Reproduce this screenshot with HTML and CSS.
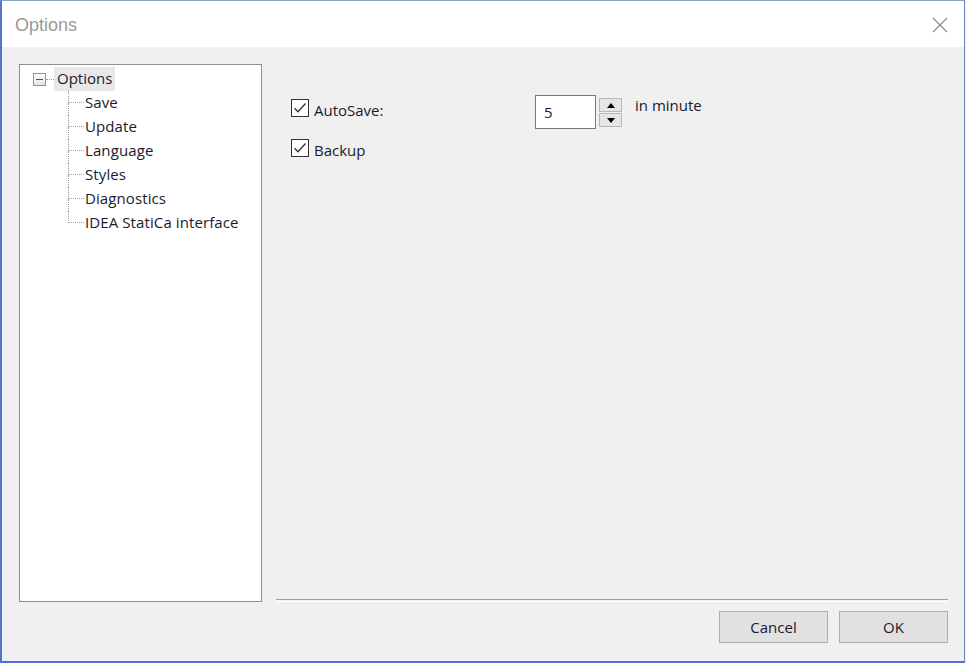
FILE: index.html
```html
<!DOCTYPE html>
<html>
<head>
<meta charset="utf-8">
<link rel="stylesheet" href="styles.css">
</head>
<body>
<div class="window">
  <div class="titlebar">
    <span class="title">Options</span>
    <svg class="close" width="16" height="16" viewBox="0 0 16 16"><path d="M1 1L15 15M15 1L1 15" stroke="#8a8a8a" stroke-width="1.1" fill="none"/></svg>
  </div>
  <div class="content">
    <div class="main">
      <div class="tree">
        <div class="root-row">
          <span class="expander"><span class="minus"></span></span>
          <span class="root-link"></span>
          <span class="label selected">Options</span>
        </div>
        <div class="child"><span class="conn"><span class="top"></span><span class="bot"></span></span><span class="label">Save</span></div>
        <div class="child"><span class="conn"><span class="top"></span><span class="bot"></span></span><span class="label">Update</span></div>
        <div class="child"><span class="conn"><span class="top"></span><span class="bot"></span></span><span class="label">Language</span></div>
        <div class="child"><span class="conn"><span class="top"></span><span class="bot"></span></span><span class="label">Styles</span></div>
        <div class="child"><span class="conn"><span class="top"></span><span class="bot"></span></span><span class="label">Diagnostics</span></div>
        <div class="child last"><span class="conn"><span class="top"></span><span class="bot"></span></span><span class="label">IDEA StatiCa interface</span></div>
      </div>
      <div class="panel">
        <div class="options">
          <div class="row row-autosave">
            <label class="check">
              <span class="box"><svg width="14" height="14" viewBox="0 0 14 14"><path d="M1.5 7.2L5 10.8L12.5 2.5" stroke="#333" stroke-width="1.3" fill="none"/></svg></span>
              <span class="ctext">AutoSave:</span>
            </label>
            <div class="numbox">5</div>
            <div class="spin">
              <div class="spin-btn"><svg width="8" height="5" viewBox="0 0 8 5"><path d="M0 5L4 0L8 5Z" fill="#000"/></svg></div>
              <div class="spin-btn"><svg width="8" height="5" viewBox="0 0 8 5"><path d="M0 0L4 5L8 0Z" fill="#000"/></svg></div>
            </div>
            <span class="unit">in minute</span>
          </div>
          <div class="row row-backup">
            <label class="check">
              <span class="box"><svg width="14" height="14" viewBox="0 0 14 14"><path d="M1.5 7.2L5 10.8L12.5 2.5" stroke="#333" stroke-width="1.3" fill="none"/></svg></span>
              <span class="ctext">Backup</span>
            </label>
          </div>
        </div>
        <div class="separator"></div>
      </div>
    </div>
    <div class="footer">
      <button class="btn">Cancel</button>
      <button class="btn">OK</button>
    </div>
  </div>
</div>
</body>
</html>
```
FILE: styles.css
```css
html, body {
  margin: 0;
  padding: 0;
  background: #f0f0f0;
}
body {
  font-family: "Open Sans", "Liberation Sans", Arial, sans-serif;
  font-size: 15px;
  color: #1a1a2e;
}
.window {
  width: 965px;
  height: 663px;
  box-sizing: border-box;
  border-top: 1px solid #8ea2c6;
  border-left: 2px solid #5574cf;
  border-right: 1px solid #6b86c0;
  border-bottom: 2px solid #4f6fca;
  display: flex;
  flex-direction: column;
  background: #f0f0f0;
}
.titlebar {
  height: 46px;
  background: #ffffff;
  display: flex;
  align-items: center;
  justify-content: space-between;
  padding: 0 16px 0 13px;
  flex: none;
}
.title {
  font-family: "Liberation Sans", Arial, sans-serif;
  font-size: 18px;
  color: #999999;
  margin-top: 3px;
}
.close {
  margin-top: 2px;
}
.content {
  flex: 1;
  display: flex;
  flex-direction: column;
  padding: 17px 0 0 17px;
}
.main {
  display: flex;
  height: 538px;
}
.tree {
  width: 243px;
  height: 538px;
  box-sizing: border-box;
  background: #ffffff;
  border: 1px solid #8f8f8f;
  padding: 2px 0 0 13px;
}
.root-row {
  display: flex;
  align-items: center;
  height: 24px;
}
.expander {
  width: 13px;
  height: 13px;
  box-sizing: border-box;
  border: 1px solid #919191;
  background: linear-gradient(#ffffff, #e4e4e4);
  display: flex;
  align-items: center;
  justify-content: center;
  margin-top: 1px;
}
.minus {
  width: 7px;
  height: 1px;
  background: #3a4f8c;
}
.root-link {
  width: 8px;
  height: 1px;
  border-top: 1px dotted #a0a0a0;
  margin-top: 1px;
}
.label {
  height: 24px;
  box-sizing: border-box;
  line-height: 22px;
  padding-bottom: 2px;
  white-space: nowrap;
}
.label.selected {
  background: #e8e8e8;
  padding: 0 3px 2px 3px;
}
.child {
  display: flex;
  height: 24px;
  padding-left: 35px;
}
.conn {
  width: 16px;
  display: flex;
  flex-direction: column;
}
.conn .top {
  height: 11px;
  border-left: 1px dotted #a0a0a0;
  border-bottom: 1px dotted #a0a0a0;
}
.conn .bot {
  height: 12px;
  border-left: 1px dotted #a0a0a0;
}
.child.last .conn .bot {
  border-left: none;
}
.child .label {
  padding-left: 1px;
  letter-spacing: 0.1px;
}
.panel {
  flex: 1;
  display: flex;
  flex-direction: column;
  margin-left: 14px;
  margin-right: 16px;
}
.options {
  flex: 1;
  padding: 31px 0 0 15px;
}
.row {
  display: flex;
  align-items: flex-start;
}
.check {
  display: flex;
  align-items: center;
  width: 244px;
}
.box {
  width: 18px;
  height: 18px;
  box-sizing: border-box;
  border: 1px solid #333333;
  background: #ffffff;
  display: flex;
  align-items: center;
  justify-content: center;
  margin-right: 5px;
}
.ctext {
  line-height: 18px;
  margin-top: 4px;
}
.row-autosave .check {
  margin-top: 2px;
}
.numbox {
  width: 61px;
  height: 34px;
  box-sizing: border-box;
  border: 1px solid #7a7a7a;
  background: #ffffff;
  padding-left: 8px;
  line-height: 32px;
  font-size: 15px;
}
.spin {
  display: flex;
  flex-direction: column;
  margin: 3px 0 0 3px;
  gap: 1px;
}
.spin-btn {
  width: 23px;
  height: 14px;
  box-sizing: border-box;
  border: 1px solid #b8b8b8;
  background: #e6e6e6;
  display: flex;
  align-items: center;
  justify-content: center;
}
.unit {
  margin-left: 13px;
  margin-top: 0px;
}
.row-backup {
  margin-top: 8px;
}
.separator {
  height: 1px;
  border-top: 1px solid #a0a0a0;
  border-bottom: 1px solid #ffffff;
  margin-bottom: 0px;
}
.footer {
  display: flex;
  justify-content: flex-end;
  gap: 11px;
  padding-right: 16px;
  margin-top: 9px;
}
.btn {
  width: 109px;
  height: 32px;
  box-sizing: border-box;
  border: 1px solid #adadad;
  background: #e1e1e1;
  font-family: "Open Sans", "Liberation Sans", Arial, sans-serif;
  font-size: 15px;
  color: #1a1a2e;
  padding: 0;
}
```
